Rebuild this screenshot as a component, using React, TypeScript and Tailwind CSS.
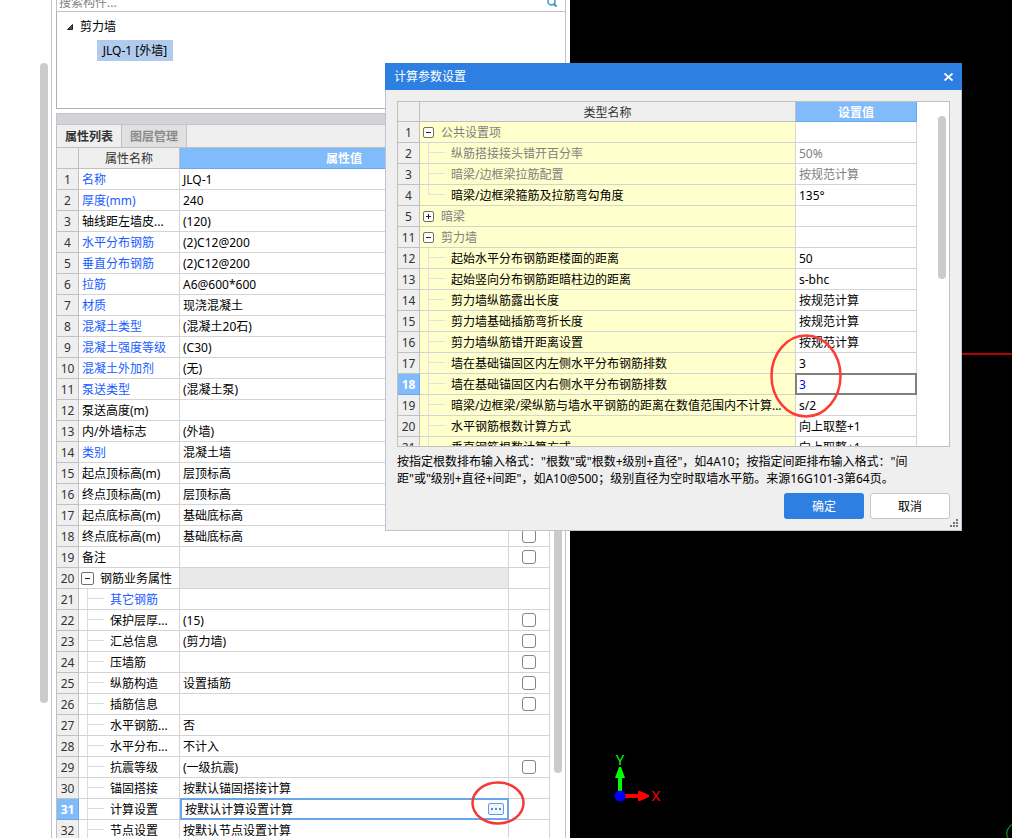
import clsx from 'clsx'

type PropertyRow = {
  name: string
  value?: string
  link?: boolean
  check?: boolean
  kind?: 'group' | 'child' | 'editing'
}

type SettingRow = {
  no: number
  name: string
  value?: string
  muted?: boolean
  kind?: 'open' | 'closed' | 'child' | 'last'
  active?: boolean
}

const properties: PropertyRow[] = [
  { name: '名称', value: 'JLQ-1', link: true },
  { name: '厚度(mm)', value: '240', link: true, check: true },
  { name: '轴线距左墙皮...', value: '(120)', check: true },
  { name: '水平分布钢筋', value: '(2)C12@200', link: true, check: true },
  { name: '垂直分布钢筋', value: '(2)C12@200', link: true, check: true },
  { name: '拉筋', value: 'A6@600*600', link: true, check: true },
  { name: '材质', value: '现浇混凝土', link: true, check: true },
  { name: '混凝土类型', value: '(混凝土20石)', link: true, check: true },
  { name: '混凝土强度等级', value: '(C30)', link: true, check: true },
  { name: '混凝土外加剂', value: '(无)', link: true },
  { name: '泵送类型', value: '(混凝土泵)', link: true },
  { name: '泵送高度(m)' },
  { name: '内/外墙标志', value: '(外墙)', check: true },
  { name: '类别', value: '混凝土墙', link: true, check: true },
  { name: '起点顶标高(m)', value: '层顶标高', check: true },
  { name: '终点顶标高(m)', value: '层顶标高', check: true },
  { name: '起点底标高(m)', value: '基础底标高', check: true },
  { name: '终点底标高(m)', value: '基础底标高', check: true },
  { name: '备注', check: true },
  { name: '钢筋业务属性', kind: 'group' },
  { name: '其它钢筋', link: true, kind: 'child' },
  { name: '保护层厚...', value: '(15)', check: true, kind: 'child' },
  { name: '汇总信息', value: '(剪力墙)', check: true, kind: 'child' },
  { name: '压墙筋', check: true, kind: 'child' },
  { name: '纵筋构造', value: '设置插筋', check: true, kind: 'child' },
  { name: '插筋信息', check: true, kind: 'child' },
  { name: '水平钢筋...', value: '否', kind: 'child' },
  { name: '水平分布...', value: '不计入', kind: 'child' },
  { name: '抗震等级', value: '(一级抗震)', check: true, kind: 'child' },
  { name: '锚固搭接', value: '按默认锚固搭接计算', kind: 'child' },
  { name: '计算设置', value: '按默认计算设置计算', kind: 'editing' },
  { name: '节点设置', value: '按默认节点设置计算', kind: 'child' },
]

const settings: SettingRow[] = [
  { no: 1, name: '公共设置项', muted: true, kind: 'open' },
  { no: 2, name: '纵筋搭接接头错开百分率', value: '50%', muted: true },
  { no: 3, name: '暗梁/边框梁拉筋配置', value: '按规范计算', muted: true },
  { no: 4, name: '暗梁/边框梁箍筋及拉筋弯勾角度', value: '135°', kind: 'last' },
  { no: 5, name: '暗梁', muted: true, kind: 'closed' },
  { no: 11, name: '剪力墙', muted: true, kind: 'open' },
  { no: 12, name: '起始水平分布钢筋距楼面的距离', value: '50' },
  { no: 13, name: '起始竖向分布钢筋距暗柱边的距离', value: 's-bhc' },
  { no: 14, name: '剪力墙纵筋露出长度', value: '按规范计算' },
  { no: 15, name: '剪力墙基础插筋弯折长度', value: '按规范计算' },
  { no: 16, name: '剪力墙纵筋错开距离设置', value: '按规范计算' },
  { no: 17, name: '墙在基础锚固区内左侧水平分布钢筋排数', value: '3' },
  { no: 18, name: '墙在基础锚固区内右侧水平分布钢筋排数', value: '3', active: true },
  { no: 19, name: '暗梁/边框梁/梁纵筋与墙水平钢筋的距离在数值范围内不计算...', value: 's/2' },
  { no: 20, name: '水平钢筋根数计算方式', value: '向上取整+1' },
  { no: 21, name: '垂直钢筋根数计算方式', value: '向上取整+1' },
]

function Toggle({ open = true, size = 11, label }: { open?: boolean; size?: number; label: string }) {
  const mid = size / 2
  return (
    <button type="button" aria-label={label} aria-expanded={open} className="flex h-[19px] shrink-0 items-center">
      <svg width={size} height={size} viewBox={`0 0 ${size} ${size}`} fill="none">
        <rect x="0.5" y="0.5" width={size - 1} height={size - 1} rx="1.5" fill="#fff" stroke="#707070" />
        <path d={`M${mid - 2.5} ${mid}h5`} stroke="#222" />
        {!open && <path d={`M${mid} ${mid - 2.5}v5`} stroke="#222" />}
      </svg>
    </button>
  )
}

function Branch({ last = false, dark = false }: { last?: boolean; dark?: boolean }) {
  return (
    <svg width="18" height="20" viewBox="0 0 18 20" fill="none" shapeRendering="crispEdges" className="shrink-0">
      <path d={last ? 'M.5 0v10M0 9.5h17' : 'M.5 0v20M0 9.5h17'} stroke={dark ? '#dcdcdc' : '#e2e2e2'} />
    </svg>
  )
}

function PropertyLine({ row, index }: { row: PropertyRow; index: number }) {
  const editing = row.kind === 'editing'
  return (
    <tr className="h-[21px]">
      <th
        scope="row"
        className={clsx(
          'border-r border-b px-0 pt-0.5 pb-0 text-center',
          editing
            ? 'border-[#69a7ea] bg-[#80bbfb] font-bold text-white'
            : 'border-[#c0c0c0] bg-[#efefef] font-normal text-[#333]',
        )}
      >
        {index}
      </th>
      <td className="border-r border-b border-[#d4d4d4] p-0">
        <div className={clsx('flex h-5 items-center overflow-hidden whitespace-nowrap', row.link && 'text-[#1a5cff]')}>
          {row.kind === 'group' && (
            <span className="mr-1.5 ml-0.5 flex">
              <Toggle size={13} label={row.name} />
            </span>
          )}
          {(row.kind === 'child' || editing) && (
            <span className="mr-[5px] ml-2 flex">
              <Branch dark />
            </span>
          )}
          <span className={clsx('pt-0.5', !row.kind && 'pl-[3px]')}>{row.name}</span>
        </div>
      </td>
      <td className={clsx('border-r border-b border-[#d4d4d4] p-0', row.kind === 'group' && 'bg-[#e9e9e9]')}>
        {editing ? (
          <div className="-my-px -mr-px flex h-[22px] items-center border-2 border-[#69a7ea] bg-white pr-[3px]">
            <input aria-label={row.name} defaultValue={row.value} className="min-w-0 flex-1 px-[3px] pt-0.5 outline-none" />
            <button
              type="button"
              aria-label="更多"
              className="flex h-3 w-4 items-center justify-center gap-0.5 rounded-[2px] border border-[#5b9fe0] bg-[#eff5fb]"
            >
              <i className="size-0.5 bg-[#4b94dc]" />
              <i className="size-0.5 bg-[#4b94dc]" />
              <i className="size-0.5 bg-[#4b94dc]" />
            </button>
          </div>
        ) : (
          <div className="h-5 pt-0.5 pl-[3px] leading-[18px] whitespace-nowrap">{row.value}</div>
        )}
      </td>
      <td className="border-r border-b border-[#d4d4d4] p-0">
        {row.check && (
          <input
            type="checkbox"
            aria-label={row.name}
            className="mx-auto block size-3.5 appearance-none rounded-[3px] border border-[#858585] bg-white"
          />
        )}
      </td>
    </tr>
  )
}

function PropertyPanel() {
  return (
    <section className="flex min-h-0 flex-1 flex-col border-l border-[#c0c0c0]">
      <div className="flex h-[22px] shrink-0 bg-[#efefef]" role="tablist">
        <button type="button" role="tab" aria-selected="true" className="w-[65px] border-r border-[#c0c2c8] pt-0.5 text-center font-bold text-[#333]">
          属性列表
        </button>
        <button type="button" role="tab" aria-selected="false" className="w-[65px] border-r border-[#c0c2c8] bg-[#e0e0e0] pt-0.5 text-center font-bold text-[#8b8b8b]">
          图层管理
        </button>
      </div>
      <div className="flex min-h-0 flex-1 overflow-hidden border-t border-[#c0c0c0]">
        <div className="min-w-0 flex-1">
          <table className="w-full table-fixed border-separate border-spacing-0">
            <colgroup>
              <col className="w-[22px]" />
              <col className="w-[101px]" />
              <col />
              <col className="w-[41px]" />
            </colgroup>
            <thead>
              <tr className="h-[21px] bg-[#efefef] text-[#333]">
                <th className="border-r border-b border-[#c0c0c0] p-0" />
                <th className="border-r border-b border-[#c0c0c0] px-0 pt-0.5 pb-0 font-normal">属性名称</th>
                <th className="border-r border-b border-[#69a7ea] bg-[#80bbfb] px-0 pt-0.5 pb-0 font-bold text-white">属性值</th>
                <th className="border-r border-b border-[#c0c0c0] p-0" />
              </tr>
            </thead>
            <tbody>
              {properties.map((row, i) => (
                <PropertyLine key={i} row={row} index={i + 1} />
              ))}
            </tbody>
          </table>
        </div>
        <div className="flex w-[15px] shrink-0 flex-col items-center pt-5">
          <div className="h-[605px] w-2 rounded-full bg-[#cbcbcb]" />
        </div>
      </div>
    </section>
  )
}

function ComponentTree() {
  return (
    <>
      <div className="-mt-2 flex h-5 shrink-0 items-center border-b border-l border-[#c0c2c8] pr-2">
        <input
          type="search"
          aria-label="搜索构件"
          placeholder="搜索构件..."
          className="min-w-0 flex-1 px-0.5 pt-0.5 outline-none placeholder:text-[#808080]"
        />
        <svg width="10" height="10" viewBox="0 0 10 10" fill="none" stroke="#3b97cc" strokeWidth="1.5">
          <circle cx="4.5" cy="4.5" r="3.5" />
          <path d="M6.500 6.500l3 3" strokeWidth="2" />
        </svg>
      </div>
      <div className="h-[97px] shrink-0 border-b border-l border-[#b0b0b0] pt-1">
        <div className="mb-0.5 flex h-[22px] items-center pl-2.5">
          <svg width="6" height="6" viewBox="0 0 6 6">
            <path d="M5.500 .5v5h-5z" fill="#555" stroke="#222" />
          </svg>
          <span className="ml-[7px]">剪力墙</span>
        </div>
        <div className="ml-10 flex h-[21px] w-[76px] items-center justify-center bg-[#b1cbec] whitespace-nowrap">
          JLQ-1 [外墙]
        </div>
      </div>
      <div className="mt-1 h-3 shrink-0 border-y border-l border-[#c3c4cc] bg-[#d3d4da]" />
    </>
  )
}

function SettingLine({ row }: { row: SettingRow }) {
  const group = row.kind === 'open' || row.kind === 'closed'
  return (
    <tr className={clsx('h-[21px]', row.muted && 'text-[#808080]')}>
      <th
        scope="row"
        className={clsx(
          'border-r border-b px-0 pt-0.5 pb-0 text-center',
          row.active
            ? 'border-[#69a7ea] bg-[#80bbfb] font-bold text-white'
            : 'border-[#c0c0c0] bg-[#efefef] font-normal text-[#333]',
        )}
      >
        {row.no}
      </th>
      <td className="border-r border-b border-[#d4d4d4] bg-[#ffffcc] p-0">
        <div className="flex h-5 items-center overflow-hidden whitespace-nowrap">
          {group ? (
            <span className="mr-[7px] ml-[3px] flex">
              <Toggle open={row.kind === 'open'} label={row.name} />
            </span>
          ) : (
            <span className="mr-[5px] ml-2 flex">
              <Branch last={row.kind === 'last'} />
            </span>
          )}
          <span className="pt-0.5">{row.name}</span>
        </div>
      </td>
      <td className="border-r border-b border-[#d4d4d4] bg-white p-0">
        {row.active ? (
          <div className="relative -m-px flex h-[22px] border-2 border-[#808080]">
            <input
              aria-label={row.name}
              defaultValue={row.value}
              className="min-w-0 flex-1 px-0.5 pt-0.5 text-[#0000ff] outline-none"
            />
          </div>
        ) : (
          <div className="h-5 pt-0.5 pl-[3px] leading-[18px] whitespace-nowrap">{row.value}</div>
        )}
      </td>
    </tr>
  )
}

function SettingsDialog() {
  return (
    <div
      role="dialog"
      aria-labelledby="dialog-title"
      className="absolute top-[63px] left-[385px] w-[577px] bg-[#efefef]"
    >
      <header className="flex h-[27px] items-center justify-between bg-[#2d7fe1] px-[9px] text-white">
        <h2 id="dialog-title">计算参数设置</h2>
        <button type="button" aria-label="关闭">
          <svg width="9" height="8" viewBox="0 0 9 8" stroke="#fff" strokeWidth="1.8">
            <path d="M.5 .5l8 7M8.500 .5l-8 7" />
          </svg>
        </button>
      </header>
      <div className="relative border-x border-b border-[#b9c4d4] p-[11px]">
        <div className="flex h-[346px] overflow-hidden border border-[#c0c0c0] bg-white">
          <div className="min-w-0 flex-1">
            <table className="w-full table-fixed border-separate border-spacing-0">
              <colgroup>
                <col className="w-[22px]" />
                <col />
                <col className="w-[121px]" />
              </colgroup>
              <thead>
                <tr className="h-5 bg-[#efefef] text-[#333]">
                  <th className="border-r border-b border-[#c0c0c0] p-0" />
                  <th className="border-r border-b border-[#c0c0c0] px-0 pt-0.5 pb-0 font-normal">类型名称</th>
                  <th className="border-r border-b border-[#69a7ea] bg-[#80bbfb] px-0 pt-0.5 pb-0 font-bold text-white">设置值</th>
                </tr>
              </thead>
              <tbody>
                {settings.map((row) => (
                  <SettingLine key={row.no} row={row} />
                ))}
              </tbody>
            </table>
          </div>
          <div className="flex w-8 shrink-0 justify-end pt-3.5 pr-[3px]">
            <div className="h-[163px] w-2 rounded-full bg-[#cbcbcb]" />
          </div>
        </div>
        <p className="mt-1.5 leading-[17px]">
          按指定根数排布输入格式："根数"或"根数+级别+直径"，如4A10；按指定间距排布输入格式："间
          <br />
          距"或"级别+直径+间距"，如A10@500；级别直径为空时取墙水平筋。来源16G101-3第64页。
        </p>
        <div className="mt-1.5 flex justify-end gap-1.5">
          <button type="button" className="h-[26px] w-20 rounded-[3px] bg-[#2d7fe1] pt-0.5 text-white">
            确定
          </button>
          <button type="button" className="h-[26px] w-20 rounded-[3px] border border-[#c8c8c8] bg-white pt-0.5">
            取消
          </button>
        </div>
        <svg width="8" height="8" viewBox="0 0 8 8" fill="#777" className="absolute right-[3px] bottom-[3px]">
          <path d="M6 0h2v2H6zM6 3h2v2H6zM6 6h2v2H6zM3 3h2v2H3zM3 6h2v2H3zM0 6h2v2H0z" />
        </svg>
      </div>
    </div>
  )
}

function ModelView() {
  return (
    <main className="relative min-w-0 flex-1 overflow-hidden bg-black">
      <div className="absolute top-[353px] left-0 h-0.5 w-full bg-[#b80000]" />
      <svg
        width="54"
        height="62"
        viewBox="0 -8 54 62"
        fontSize="15"
        textAnchor="middle"
        className="absolute top-[744px] left-10"
      >
        <text x="10" y="13" fill="#0f0">Y</text>
        <path d="M8 40V26H5l4-11h2l4 11h-3v14z" fill="#0f0" />
        <path d="M15 42h13v-3h2l9 4v2l-9 4h-2v-3H15z" fill="#f00" />
        <circle cx="10" cy="44" r="5.500" fill="#00f" />
        <text x="46" y="49" fill="#f00">X</text>
      </svg>
      <svg width="6" height="14" viewBox="0 0 6 14" fill="none" className="absolute right-0 bottom-0">
        <path d="M6 .5C3 3 .8 6 .8 9c0 2 .4 4 1.200 5" stroke="#0a8a1c" strokeWidth="1.300" />
      </svg>
    </main>
  )
}

export default function App() {
  return (
    <div className="relative flex h-screen overflow-hidden bg-white font-['Noto_Sans','Noto_Sans_CJK_SC',sans-serif] text-xs text-black">
      <aside className="flex w-[52px] shrink-0 justify-end border-r border-[#c0c2c8] pt-[63px] pr-[3px]">
        <div className="h-[640px] w-2 rounded-full bg-[#cbcbcb]" />
      </aside>
      <div className="flex w-[514px] shrink-0 flex-col overflow-hidden border-r border-[#c0c2c8] pl-1">
        <ComponentTree />
        <PropertyPanel />
      </div>
      <div className="w-1 shrink-0" />
      <ModelView />
      <SettingsDialog />
      <svg width="72" height="84" viewBox="0 0 72 84" fill="none" className="pointer-events-none absolute top-[334px] left-[770px]">
        <ellipse cx="36" cy="42" rx="34.500" ry="40.500" stroke="#ff3b36" strokeWidth="2.500" />
      </svg>
      <svg width="54" height="44" viewBox="0 0 54 44" fill="none" className="pointer-events-none absolute top-[781px] left-[471px]">
        <ellipse cx="27" cy="22" rx="25.500" ry="20.500" stroke="#f23a36" strokeWidth="2.500" />
      </svg>
    </div>
  )
}
